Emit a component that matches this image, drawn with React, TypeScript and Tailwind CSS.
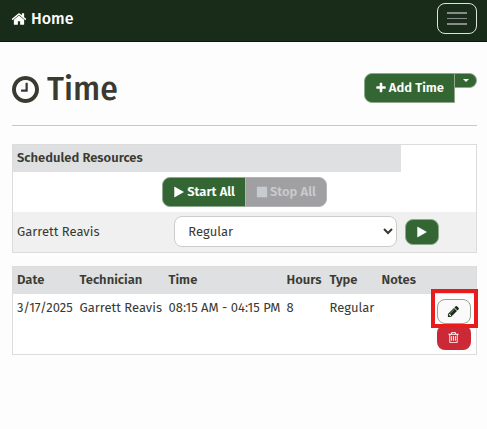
import React from "react";

interface GlyphProps {
	d: string;
	className: string;
	viewBox?: string;
}

const Glyph: React.FC<GlyphProps> = ({ d, className, viewBox = "0 0 1792 1792" }) => (
	<svg viewBox={viewBox} className={className} fill="currentColor" aria-hidden="true">
		<path d={d} />
	</svg>
);

const HOME =
	"M1472 992v480q0 26-19 45t-45 19h-384v-384h-256v384h-384q-26 0-45-19t-19-45v-480q0-1 .5-3t.5-3l575-474 575 474q1 2 1 6zm223-69l-62 74q-8 9-21 11h-3q-13 0-21-7l-692-577-692 577q-12 8-24 7-13-2-21-11l-62-74q-8-10-7-23.5t11-21.5l719-599q32-26 76-26t76 26l244 204v-195q0-14 9-23t23-9h192q14 0 23 9t9 23v408l219 182q10 8 11 21.5t-7 23.5z";
const CLOCK =
	"M896 544v448q0 14-9 23t-23 9h-320q-14 0-23-9t-9-23v-64q0-14 9-23t23-9h224v-352q0-14 9-23t23-9h64q14 0 23 9t9 23zm416 352q0-148-73-273t-198-198-273-73-273 73-198 198-73 273 73 273 198 198 273 73 273-73 198-198 73-273zm224 0q0 209-103 385.5t-279.5 279.5-385.5 103-385.5-103-279.5-279.5-103-385.5 103-385.5 279.5-279.5 385.5-103 385.5 103 279.5 279.5 103 385.5z";
const PLUS =
	"M1600 736v192q0 40-28 68t-68 28h-416v416q0 40-28 68t-68 28h-192q-40 0-68-28t-28-68v-416h-416q-40 0-68-28t-28-68v-192q0-40 28-68t68-28h416v-416q0-40 28-68t68-28h192q40 0 68 28t28 68v416h416q40 0 68 28t28 68z";
const PLAY =
	"M1576 927l-1328 738q-23 13-39.5 3t-16.5-36v-1472q0-26 16.5-36t39.5 3l1328 738q23 13 23 31t-23 31z";
const STOP =
	"M1664 192v1408q0 26-19 45t-45 19h-1408q-26 0-45-19t-19-45v-1408q0-26 19-45t45-19h1408q26 0 45 19t19 45z";
const PENCIL =
	"M491 1536l91-91-235-235-91 91v107h128v128h107zm523-928q0-22-22-22-10 0-17 7l-542 542q-7 7-7 17 0 22 22 22 10 0 17-7l542-542q7-7 7-17zm-54-192l416 416-832 832h-416v-416zm683 96q0 53-37 90l-166 166-416-416 166-165q36-38 90-38 53 0 91 38l235 234q37 39 37 91z";
const TRASH =
	"M704 736v576q0 14-9 23t-23 9h-64q-14 0-23-9t-9-23v-576q0-14 9-23t23-9h64q14 0 23 9t9 23zm256 0v576q0 14-9 23t-23 9h-64q-14 0-23-9t-9-23v-576q0-14 9-23t23-9h64q14 0 23 9t9 23zm256 0v576q0 14-9 23t-23 9h-64q-14 0-23-9t-9-23v-576q0-14 9-23t23-9h64q14 0 23 9t9 23zm128 724v-948h-896v948q0 22 7 40.5t14.5 27 10.5 8.5h832q3 0 10.5-8.5t14.5-27 7-40.5zm-672-1076h448l-48-117q-7-9-17-11h-317q-10 2-17 11zm928 32v64q0 14-9 23t-23 9h-96v948q0 83-47 143.5t-113 60.5h-832q-66 0-113-58.5t-47-141.5v-952h-96q-14 0-23-9t-9-23v-64q0-14 9-23t23-9h309l70-167q15-37 54-63t79-26h320q40 0 79 26t54 63l70 167h309q14 0 23 9t9 23z";

const entries = [
	{
		date: "3/17/2025",
		technician: "Garrett Reavis",
		time: "08:15 AM - 04:15 PM",
		hours: 8,
		type: "Regular",
		notes: "",
	},
];

const Navbar = () => (
	<nav className="flex h-[42px] items-start justify-between border-b border-[#0c160c] bg-[#192c19] pt-[3px] pr-[10px] pl-[11px]">
		<a href="#" className="flex h-8 items-center gap-1 text-base font-medium text-white">
			<Glyph d={HOME} className="size-4" />
			Home
		</a>
		<button
			aria-label="Toggle navigation"
			className="flex h-[31px] w-10 flex-col items-center justify-center gap-1 rounded-lg border border-[#dfe3df]"
		>
			<span className="h-[2px] w-5 bg-[#888c88]" />
			<span className="h-px w-5 bg-[#888c88]" />
			<span className="h-[2px] w-5 bg-[#888c88]" />
		</button>
	</nav>
);

const PageHeader = () => (
	<header className="flex items-start justify-between border-b border-[#c8c8c8] pt-[31px] pb-5">
		<h1 className="flex h-8 items-center gap-2 text-[32px] font-medium">
			<Glyph d={CLOCK} viewBox="0 128 1536 1536" className="size-[27px]" />
			Time
		</h1>
		<div className="flex items-start">
			<button className="flex h-[30px] items-center gap-[2px] rounded-l-lg border border-[#8fa88f] bg-[#336633] px-[10px] font-semibold text-white">
				<Glyph d={PLUS} className="size-3" />
				Add Time
			</button>
			<button
				aria-label="More options"
				className="-ml-px flex h-[15px] w-[23px] items-center justify-center rounded-r-lg border border-[#8fa88f] bg-[#336633]"
			>
				<span className="border-x-[3px] border-t-[3px] border-x-transparent border-t-white" />
			</button>
		</div>
	</header>
);

const ScheduledResources = () => (
	<table className="mt-[18px] w-full table-fixed border border-[#dcdcdc] bg-white">
		<colgroup>
			<col className="w-[34%]" />
			<col />
			<col className="w-[76px]" />
		</colgroup>
		<thead>
			<tr className="h-[27px]">
				<th colSpan={2} className="bg-[#dfe0e2] px-1 text-left font-semibold">
					Scheduled Resources
				</th>
				<td />
			</tr>
		</thead>
		<tbody>
			<tr className="h-10">
				<td colSpan={3}>
					<div className="flex justify-center">
						<button className="flex h-[30px] items-center gap-[2px] rounded-l-lg border border-[#8fa88f] bg-[#336633] px-[10px] font-semibold text-white">
							<Glyph d={PLAY} className="size-3" />
							Start All
						</button>
						<button
							disabled
							className="-ml-px flex h-[30px] items-center gap-[2px] rounded-r-lg border border-[#b4b4b6] bg-[#a0a0a2] px-[10px] font-semibold text-[#c9cbce]"
						>
							<Glyph d={STOP} className="size-3" />
							Stop All
						</button>
					</div>
				</td>
			</tr>
			<tr className="h-[41px] bg-[#f0f0f0]">
				<td className="px-1">Garrett Reavis</td>
				<td className="px-1">
					<select
						aria-label="Time type for Garrett Reavis"
						defaultValue="Regular"
						className="h-[31px] w-full rounded-lg border border-[#cccccc] bg-white px-[9px] pr-0"
					>
						<option>Regular</option>
						<option>Overtime</option>
					</select>
				</td>
				<td className="px-1">
					<button
						aria-label="Start Garrett Reavis"
						className="flex h-[26px] w-[34px] items-center justify-center rounded-lg border border-[#8fa88f] bg-[#336633] text-white"
					>
						<Glyph d={PLAY} className="size-3" />
					</button>
				</td>
			</tr>
		</tbody>
	</table>
);

const TimeEntries = () => (
	<table className="mt-[13px] w-full table-fixed border border-[#dcdcdc] bg-white">
		<colgroup>
			<col className="w-[63px]" />
			<col className="w-[89px]" />
			<col className="w-[118px]" />
			<col className="w-[43px]" />
			<col className="w-[52px]" />
			<col />
			<col className="w-11" />
		</colgroup>
		<thead>
			<tr className="h-[27px] bg-[#dfe0e2] text-left">
				<th className="px-1 font-semibold">Date</th>
				<th className="px-1 font-semibold">Technician</th>
				<th className="px-1 font-semibold">Time</th>
				<th className="px-1 font-semibold">Hours</th>
				<th className="px-1 font-semibold">Type</th>
				<th className="px-1 font-semibold">Notes</th>
				<td />
			</tr>
		</thead>
		<tbody>
			{entries.map((entry) => (
				<tr key={entry.date} className="align-top whitespace-nowrap">
					<td className="px-1 py-1">{entry.date}</td>
					<td className="px-1 py-1">{entry.technician}</td>
					<td className="px-1 py-1">{entry.time}</td>
					<td className="px-1 py-1">{entry.hours}</td>
					<td className="px-1 py-1">{entry.type}</td>
					<td className="px-1 py-1">{entry.notes}</td>
					<td className="px-1 pt-[5px] pb-1">
						<div className="relative flex flex-col gap-px">
							<button
								aria-label="Edit entry"
								className="flex h-[25px] w-[34px] items-center justify-center rounded-lg border border-[#8fa88f] bg-[#fafafa] text-[#192c19]"
							>
								<Glyph d={PENCIL} className="size-[13px]" />
							</button>
							<button
								aria-label="Delete entry"
								className="flex h-[25px] w-[34px] items-center justify-center rounded-lg bg-[#cc2936] text-white"
							>
								<Glyph d={TRASH} className="size-[13px]" />
							</button>
							{/* highlight around the edit button */}
							<span className="pointer-events-none absolute -top-[10px] -left-[6px] h-[39px] w-[47px] border-4 border-[#e81c1c]" />
						</div>
					</td>
				</tr>
			))}
		</tbody>
	</table>
);

export default function App() {
	return (
		<div className="min-h-screen bg-[#fdfdfd] font-['Fira_Sans','Noto_Sans',sans-serif] text-[13px] leading-5 text-[#3a3a32]">
			<Navbar />
			<main className="pr-[10px] pl-3">
				<PageHeader />
				<ScheduledResources />
				<TimeEntries />
			</main>
		</div>
	);
}
